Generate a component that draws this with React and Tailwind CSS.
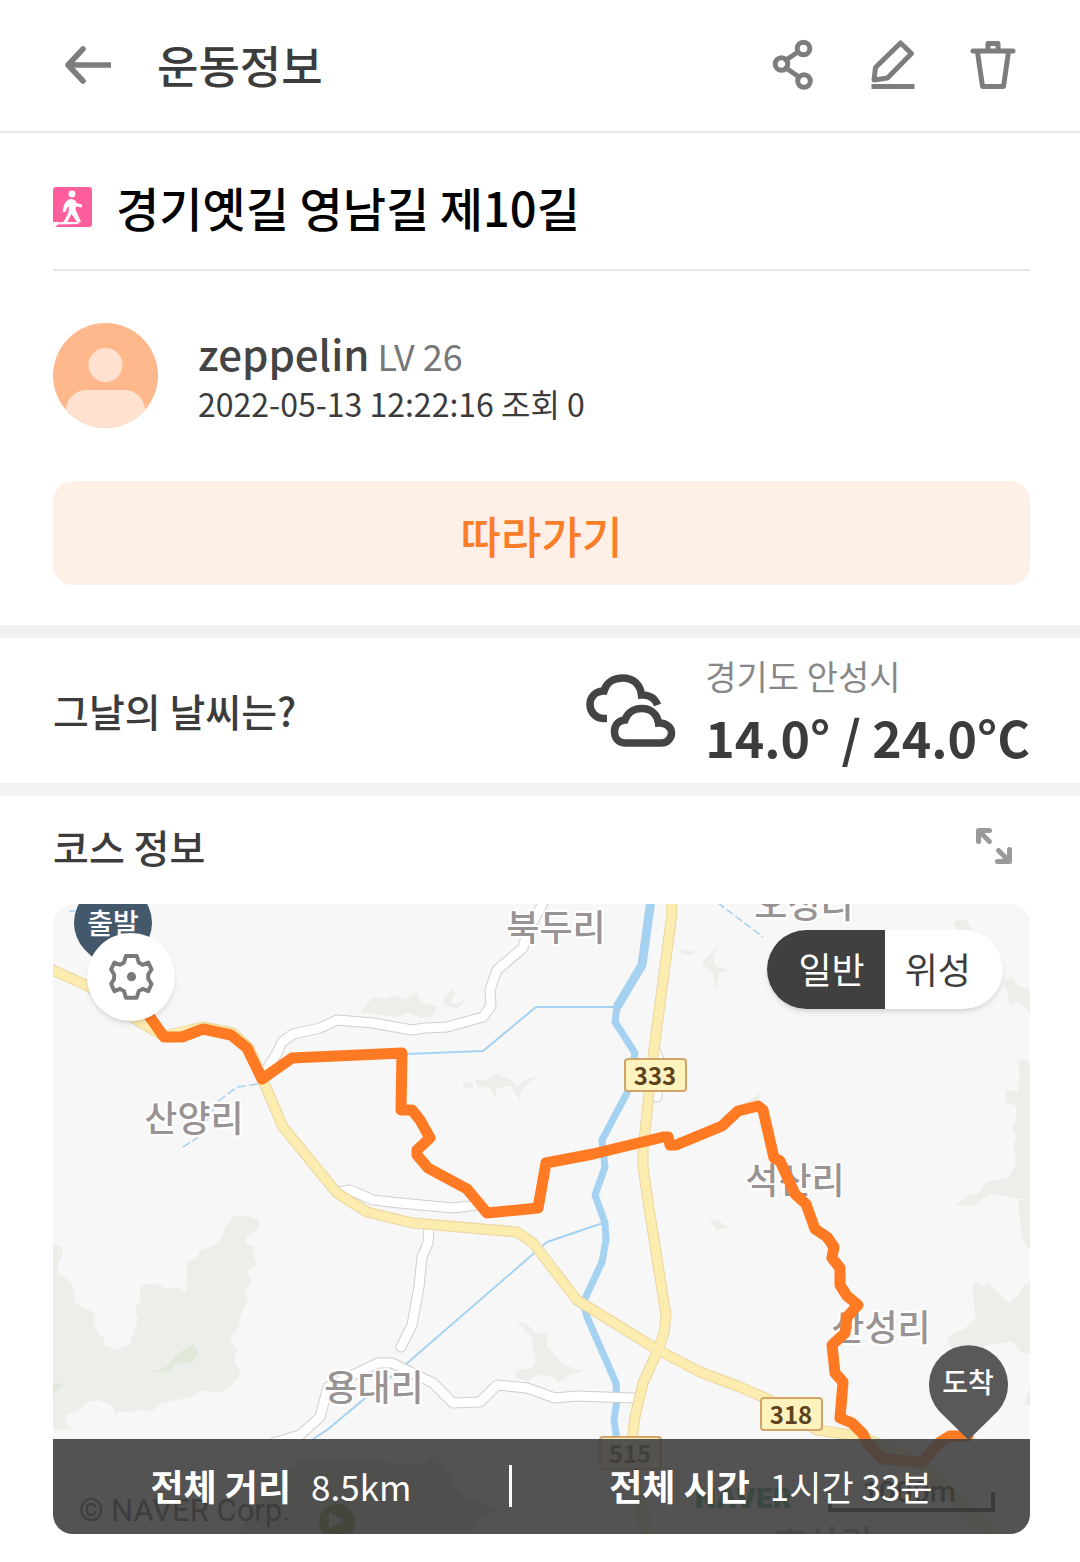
import React, { useState } from 'react';

const iconStroke = {
  fill: 'none',
  stroke: '#7d7d7d',
  strokeWidth: 5,
  strokeLinejoin: 'round',
  strokeLinecap: 'round',
};

const BackIcon = () => (
  <svg width="48" height="40" viewBox="0 0 48 40" {...iconStroke} strokeWidth="5.500" aria-hidden="true">
    <path d="M46 20H4" strokeLinecap="butt" />
    <path d="M18 4 3 20l15 16" />
  </svg>
);

const ShareIcon = () => (
  <svg width="44" height="52" viewBox="0 0 44 52" {...iconStroke} aria-hidden="true">
    <circle cx="10.500" cy="25" r="6.300" />
    <circle cx="32.500" cy="9.500" r="6.300" />
    <circle cx="33" cy="42" r="6.300" />
    <path d="m15 21 12-8M15 29l13 9" />
  </svg>
);

const EditIcon = () => (
  <svg width="44" height="52" viewBox="0 0 44 52" {...iconStroke} aria-hidden="true">
    <path d="m29.500 4 11 10.500-24 24.500L3 41l1.500-12.500z" />
    <path d="M.5 47.500h43" strokeLinecap="butt" />
  </svg>
);

const TrashIcon = () => (
  <svg width="46" height="52" viewBox="0 0 46 52" {...iconStroke} aria-hidden="true">
    <path d="M3 12h40" />
    <path d="M18 11V4.500h10V11" />
    <path d="m7.500 13 5 34.500h21L38.500 13" />
  </svg>
);

const WalkIcon = () => (
  <svg width="39" height="40" viewBox="0 0 39 40" className="shrink-0" role="img" aria-label="걷기">
    <rect width="39" height="40" rx="3" fill="#ff5e9d" />
    <path d="M0 35h8l-6 5H0z" fill="#fff" />
    <circle cx="19" cy="7" r="3.400" fill="#fff" />
    <path
      d="M18 12c2.500 0 4.500 1 5.500 4l5.500 1.500v3l-6-1-.5 3 5.500 12.500h-4L18.500 27 14 35.500l-4 .5 5.500-10.500.5-6-2 1.500-1.500 4H9.500l1.500-7c1.500-3 4-6 7-6z"
      fill="#fff"
    />
    <path d="M5 37.500 9 35h18l-2.500 2z" fill="#fff" />
  </svg>
);

const Avatar = () => (
  <svg width="105" height="105" viewBox="0 0 105 105" className="shrink-0" role="img" aria-label="프로필">
    <defs>
      <clipPath id="avatar-clip">
        <circle cx="52.500" cy="52.500" r="52.500" />
      </clipPath>
    </defs>
    <g clipPath="url(#avatar-clip)">
      <rect width="105" height="105" fill="#ffb88c" />
      <circle cx="52.500" cy="42" r="17" fill="#ffe1d0" />
      <path d="M13 105V88c0-12 9-21 21-21h37c12 0 21 9 21 21v17z" fill="#ffe1d0" />
    </g>
  </svg>
);

const CloudIcon = () => (
  <svg width="92" height="74" viewBox="0 0 92 74" fill="none" stroke="#444" strokeWidth="7.500" role="img" aria-label="구름많음">
    <path d="M22 45.500h-4C10.500 45 5 39 5 31.500s5.500-13.500 14-13.500C21 10 28 5 38 5c10 0 17.500 6.500 18.500 17C64 21.500 70 25 72.500 32" />
    <path d="M40 70c-7.500 0-10.500-6-10.500-11.500 0-6 3.500-11 10.500-11.500 2-6.500 8-11.500 17-11.500 9.500 0 15.500 6.500 16.500 14.500 7-.5 13 4 13 10 0 5-4 10-10 10z" />
  </svg>
);

const ExpandIcon = () => (
  <svg width="38" height="38" viewBox="0 0 38 38" {...iconStroke} stroke="#9a9a9a" aria-hidden="true">
    <path d="M14.500 3.500h-11v11M4 4l10.500 10.500" />
    <path d="M22.500 34.500h12v-12M34 34 23.500 23.500" />
  </svg>
);

const GearIcon = () => (
  <svg width="45" height="46" viewBox="207 190 136 140" {...iconStroke} stroke="#7a7a7a" strokeWidth="12" aria-hidden="true">
    <path d="M258 196h33l6 20 12 7 17-7 10 21-10 15v14l10 15-10 22-17-7-12 7-6 20h-33l-6-20-12-7-17 7-10-22 9-15v-14l-9-15 10-21 17 7 12-7z" />
    <circle cx="275" cy="259" r="14" fill="#7a7a7a" stroke="none" />
  </svg>
);

const VILLAGES = [
  { name: '북두리', x: 556, y: 941 },
  { name: '오성리', x: 804, y: 918 },
  { name: '산양리', x: 194, y: 1132 },
  { name: '석산리', x: 795, y: 1194 },
  { name: '산성리', x: 881, y: 1341 },
  { name: '용대리', x: 374, y: 1401 },
  { name: '호산리', x: 823, y: 1557 },
];

const ROUTES = [
  { no: '333', x: 655, y: 1075 },
  { no: '318', x: 791, y: 1414 },
  { no: '515', x: 630, y: 1453 },
];

const WHITE_ROADS = [
  'M265 1072 277 1053 282 1042 293 1034 320 1028 337 1020 373 1023 412 1030 425 1028 447 1027 483 1017 491 1006 490 990 497 970 523 948 527 933 543 903',
  'M337 1192 350 1190 373 1200 400 1203 453 1208 478 1205',
  'M429 1227 428 1243 422 1257 419 1287 412 1325 401 1347',
  'M243 1478 250 1462 273 1443 300 1435 320 1417 328 1387 378 1363 392 1363 433 1383 453 1403 480 1402 497 1385 527 1388 555 1398 577 1396 634 1398',
  'M655 1050 659 1060 657 1097',
];

const YELLOW_ROADS = [
  'M50 969 88 986 140 1022 164 1036 203 1027 233 1033 249 1048 265 1085 283 1127 337 1193 367 1212 400 1220 413 1223 517 1232 533 1243 577 1300 658 1350 700 1372 740 1387 770 1400 817 1430 863 1437 920 1463 993 1536',
  'M671 900 672 913 653 1057 643 1150 643 1167 649 1208 666 1315 664 1333 658 1350 643 1383 635 1417 632 1440 637 1493 648 1536',
];

const COURSE =
  'M140 1003 150 1017 164 1037 182 1037 203 1029 231 1035 247 1048 262 1079 292 1058 402 1053 401 1110 412 1110 420 1120 430 1138 417 1150 417 1155 428 1168 467 1189 487 1213 538 1208 546 1163 593 1154 663 1137 668 1137 670 1145 676 1145 722 1126 738 1111 758 1106 763 1110 774 1158 780 1161 795 1194 806 1204 815 1229 827 1237 834 1247 832 1258 840 1268 840 1285 847 1296 858 1305 847 1317 845 1333 832 1345 835 1373 843 1382 840 1418 852 1423 863 1434 867 1443 882 1459 922 1462 940 1442 950 1436 968 1436';

const CourseMap = () => (
  <svg viewBox="53 904 977 630" className="block w-full font-['Noto_Sans_CJK_KR',sans-serif]" role="img" aria-label="코스 지도">
    <rect x="53" y="904" width="977" height="630" fill="#f7f7f7" />

    {/* forests */}
    <g fill="#ecefe9">
      <path d="M53 1245 62 1247 63 1254 58 1264 58 1273 72 1283 75 1294 74 1303 93 1312 95 1316 93 1323 99 1334 104 1338 104 1345 117 1350 130 1344 134 1331 138 1319 135 1308 140 1301 140 1288 146 1284 157 1283 165 1288 178 1287 186 1292 187 1278 186 1262 197 1258 200 1250 213 1246 219 1242 225 1228 234 1216 248 1216 259 1220 259 1229 247 1236 246 1243 255 1247 253 1254 257 1265 247 1271 252 1282 245 1291 248 1300 240 1317 239 1326 230 1339 237 1350 234 1360 241 1374 234 1383 222 1392 214 1393 202 1390 190 1398 176 1400 160 1404 151 1412 141 1409 132 1413 120 1411 116 1416 112 1405 98 1400 88 1402 78 1410 67 1415 65 1422 72 1429 53 1430z" />
      <path d="M360 1013 373 997 386 999 395 995 403 1000 417 992 421 1003 438 1007 431 1017 420 1018 408 1012 398 1017 377 1014z" />
      <path d="m443 1000 9-11 4 5-6 8 8 2 14-10-15 14-12-2zM463 1083l10 0 0 6-10-2zM475 1079l10 1 12-6 14 6 6 6 9-7 12-3-14 10-4 8 0 6-9-14-14 2-2 10-6-10-12-2z" />
      <path d="m516 1320 12 5 8 9 11-2 0 14 15 18 20 7-16 6-8 6-5-7-17-1-8 7-12-4 0-7 16-3 4-7-5-24z" />
      <path d="m702 962 8-8 8-8-5 12 3 8 12 4-9 4-2 18-4-18-8-8zM680 950l14 1-2 4-10-1zM709 1219l8 1 12 7-12 3zM720 1118l20-12 22-14-6 14z" />
      <path d="m953 924 6-5 8 2 6 12-10 4zM1003 980l10-2 4 7 13 5 0 21-13-9-7 4-3-14zM1018 1062l6-3 6 3 0 138-40-6-18 12-16-1 14-11 8 0 8-12 22-4 8-14-2-20 3-8-5-6 4-12 0-12-10-4 0-12 12 2 2-22z" />
      <path d="m1018 1200 12 0 0 50-8-10zM973 1283l3-2 6 5 6-3 12 12 8 8 10-8 6-10 6-2 0 70-8 0-10-12-24 4-8 4-12-2-14 4-8-10 6-8 12-4 12-12-3-20zM1025 1402l5-14 0 18-8-2z" />
    </g>
    <path d="M240 1534 250 1510 264 1490 303 1458 320 1461 380 1462 422 1465 433 1455 445 1465 455 1487 470 1500 498 1508 478 1522 470 1534z" fill="#cfdccb" />
    <g fill="#dfe8d9">
      <path d="m152 1372 18-7 7-11 16-10 5 8-5 10-18 2-5 7z" />
      <path d="m53 1383 10 1-10 10z" />
    </g>

    {/* water */}
    <g fill="none" stroke="#a6d2f1" strokeLinejoin="round">
      <path d="M651 900 642 965 617 1007" strokeWidth="9" />
      <path d="M642 965 617 1007 615 1022 635 1053 627 1093 602 1140 605 1167 595 1195 605 1223 606 1240 602 1262 583 1303 587 1317 616 1383 617 1400 614 1420 617 1440" strokeWidth="7" />
      <path d="M407 1054 483 1051 536 1007 615 1007" strokeWidth="2" />
      <path d="M603 1223 547 1242 405 1365 327 1430 313 1439" strokeWidth="2" />
      <path d="M258 1084 237 1087 217 1102 206 1122 197 1138 183 1147" strokeWidth="1.500" strokeDasharray="9 3" />
      <path d="M718 903 763 937M69 911h8" strokeWidth="1.500" strokeDasharray="8 3" />
    </g>

    {/* roads: casing first, then the surface */}
    <g fill="none" strokeLinejoin="round" strokeLinecap="round">
      {WHITE_ROADS.map((d) => (
        <path key={d} d={d} stroke="#cfcfcf" strokeWidth="11" />
      ))}
      {WHITE_ROADS.map((d) => (
        <path key={d} d={d} stroke="#fff" strokeWidth="9" />
      ))}
      {YELLOW_ROADS.map((d) => (
        <path key={d} d={d} stroke="#e9d6a0" strokeWidth="11" />
      ))}
      {YELLOW_ROADS.map((d) => (
        <path key={d} d={d} stroke="#fcecaf" strokeWidth="9" />
      ))}
    </g>

    <g fontSize="36" fontWeight="500" textAnchor="middle" fill="#9a9393" stroke="#fff" strokeWidth="4" strokeLinejoin="round" paintOrder="stroke">
      {VILLAGES.map((v) => (
        <text key={v.name} x={v.x} y={v.y}>{v.name}</text>
      ))}
    </g>

    {ROUTES.map((r) => (
      <g key={r.no}>
        <rect x={r.x - 30} y={r.y - 16} width="61" height="32" rx="3" fill="#fff3bd" stroke="#d3a468" strokeWidth="2" />
        <text x={r.x} y={r.y + 10} textAnchor="middle" fontSize="24" fontWeight="700" fill="#5c431d">{r.no}</text>
      </g>
    ))}

    {/* attribution and scale */}
    <text x="79" y="1521" fontSize="31" fill="#222" className="font-['Roboto',sans-serif]">© NAVER Corp.</text>
    <circle cx="337" cy="1522" r="18" fill="#5a7a10" />
    <path d="m329 1512 15 9-15 8z" fill="#cfdccb" />
    <rect x="682" y="1478" width="122" height="42" rx="21" fill="#f2f2f2" />
    <text x="743" y="1508" textAnchor="middle" fontSize="27" fontWeight="900" fill="#0a9a43" className="font-['Inter',sans-serif]">NAVER</text>
    <text x="956" y="1502" textAnchor="end" fontSize="30" fontWeight="500" fill="#222" className="font-['Roboto',sans-serif]">1000m</text>
    <path d="M830 1492v18h163v-18" fill="none" stroke="#111" strokeWidth="4" />

    <path d={COURSE} fill="none" stroke="#ff7a22" strokeWidth="11" strokeLinejoin="round" strokeLinecap="round" />

    <path d="M113 977 85 950A39 39 0 1 1 141 950z" fill="#44586b" />
    <text x="113" y="934" textAnchor="middle" fontSize="28" fontWeight="500" fill="#fff">출발</text>
  </svg>
);

const FinishPin = () => (
  <svg width="79" height="95" viewBox="0 0 79 95" className="font-['Noto_Sans_CJK_KR',sans-serif]">
    <path d="M39.500 95 10 66A39.500 39.500 0 1 1 69 66z" fill="#595959" />
    <text x="39" y="48" textAnchor="middle" fontSize="28" fontWeight="500" fill="#fff">도착</text>
  </svg>
);

const Stat = ({ label, value }) => (
  <div className="flex flex-auto items-baseline justify-center gap-5">
    <dt className="text-[36px] leading-[52px] font-bold">{label}</dt>
    <dd className="text-[35px] leading-[52px]">{value}</dd>
  </div>
);

const App = () => {
  const [mapType, setMapType] = useState('normal');

  return (
    <main className="min-h-screen bg-white pb-7 font-['Noto_Sans_CJK_KR',sans-serif] text-[#3c3c3c]">
      {/* Header */}
      <header className="flex items-center border-b-2 border-[#e6e6e6] pt-[29px] pr-[57px] pb-[30px] pl-[65px]">
        <button type="button" aria-label="뒤로" className="flex h-[72px] items-center">
          <BackIcon />
        </button>
        <h1 className="ml-11 text-[45px] leading-[72px] font-medium">운동정보</h1>
        <div className="ml-auto flex gap-10">
          <button type="button" aria-label="공유" className="flex size-[60px] items-center justify-center">
            <ShareIcon />
          </button>
          <button type="button" aria-label="수정" className="flex size-[60px] items-center justify-center">
            <EditIcon />
          </button>
          <button type="button" aria-label="삭제" className="flex size-[60px] items-center justify-center">
            <TrashIcon />
          </button>
        </div>
      </header>

      {/* Title and author */}
      <section className="pr-[50px] pb-10 pl-[53px]">
        <div className="flex items-center gap-6 border-b-2 border-[#e6e6e6] pt-[38px] pb-[26px]">
          <WalkIcon />
          <h2 className="text-[47px] leading-[72px] font-medium text-black">경기옛길 영남길 제10길</h2>
        </div>
        <div className="flex items-center gap-10 pt-[52px] pb-[53px]">
          <Avatar />
          <div>
            <p className="pt-1 text-[36px] leading-[48px] text-[#777]">
              <span className="text-[42px] font-medium text-[#444]">zeppelin</span> LV 26
            </p>
            <p className="text-[32px] leading-[48px]">2022-05-13 12:22:16 조회 0</p>
          </div>
        </div>
        <button type="button" className="h-[104px] w-full rounded-[20px] bg-[#fff0e7] pt-1 text-[44px] font-medium text-[#fa7d28]">
          따라가기
        </button>
      </section>

      {/* Weather */}
      <section className="flex items-center justify-between border-y-[13px] border-[#f1f2f4] pt-3 pr-[50px] pb-[13px] pl-[53px]">
        <h3 className="text-[39px] font-medium">그날의 날씨는?</h3>
        <div className="flex items-center gap-7">
          <CloudIcon />
          <div>
            <p className="text-[34px] leading-[52px] text-[#888]">경기도 안성시</p>
            <p className="text-[50px] leading-[68px] font-bold">14.0° / 24.0°C</p>
          </div>
        </div>
      </section>

      {/* Course */}
      <section className="pr-[50px] pl-[53px]">
        <div className="flex items-center justify-between pt-5 pr-[17px] pb-7">
          <h3 className="text-[39px] leading-[60px] font-medium">코스 정보</h3>
          <button type="button" aria-label="지도 확대">
            <ExpandIcon />
          </button>
        </div>

        <div className="relative overflow-hidden rounded-[20px]">
          <CourseMap />

          <button
            type="button"
            aria-label="지도 설정"
            className="absolute top-[29px] left-[34px] flex size-[88px] items-center justify-center rounded-full bg-white shadow-md"
          >
            <GearIcon />
          </button>

          <div className="absolute top-[26px] right-[27px] flex overflow-hidden rounded-full bg-white text-[36px] leading-[76px] shadow-md">
            <button
              type="button"
              aria-pressed={mapType === 'normal'}
              onClick={() => setMapType('normal')}
              className={`pr-5 pb-[3px] pl-8 ${mapType === 'normal' ? 'bg-[#404040] text-white' : ''}`}
            >
              일반
            </button>
            <button
              type="button"
              aria-pressed={mapType === 'satellite'}
              onClick={() => setMapType('satellite')}
              className={`pr-8 pb-[3px] pl-5 ${mapType === 'satellite' ? 'bg-[#404040] text-white' : ''}`}
            >
              위성
            </button>
          </div>

          <div className="absolute right-[22px] bottom-[94px]">
            <FinishPin />
          </div>

          <dl className="absolute inset-x-0 bottom-0 flex h-[95px] items-center bg-[#404040]/90 pb-0.5 text-white">
            <Stat label="전체 거리" value="8.5km" />
            <div className="h-[42px] w-[3px] bg-white" />
            <Stat label="전체 시간" value="1시간 33분" />
          </dl>
        </div>
      </section>
    </main>
  );
};

export default App;
